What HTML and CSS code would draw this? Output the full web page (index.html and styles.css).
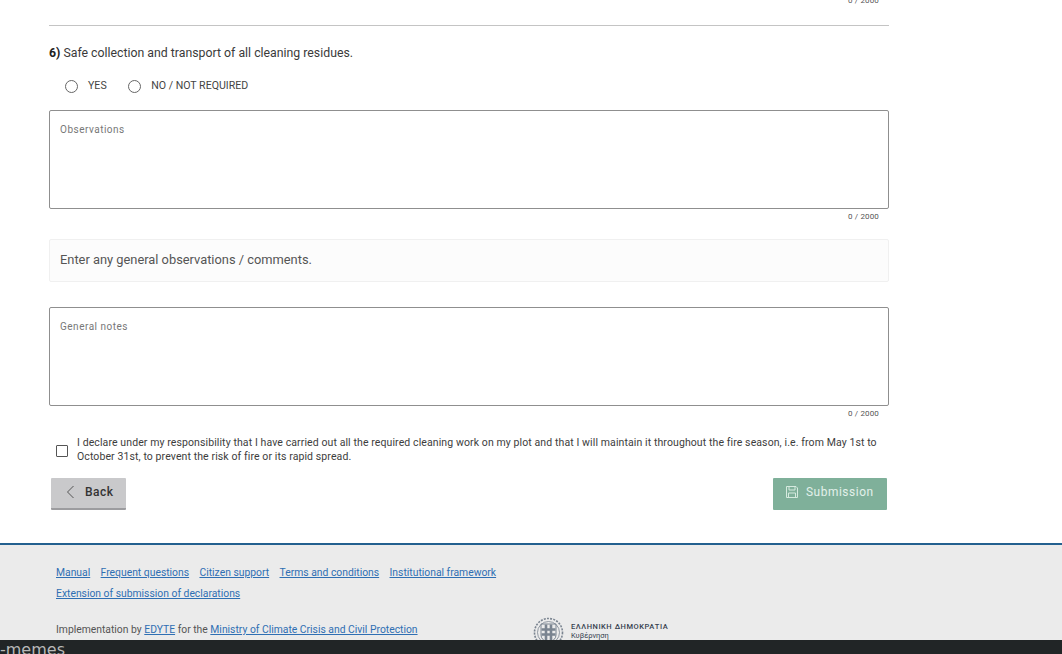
FILE: index.html
```html
<!DOCTYPE html>
<html lang="en">
<head>
<meta charset="utf-8">
<title>Declaration</title>
<link rel="stylesheet" href="styles.css">
</head>
<body>
<div class="viewport">
  <main class="form">
    <div class="counter counter-top">0 / 2000</div>
    <hr class="rule">
    <p class="question"><b>6)</b> Safe collection and transport of all cleaning residues.</p>
    <div class="radios">
      <label class="radio"><span class="radio-dot"></span>YES</label>
      <label class="radio"><span class="radio-dot"></span>NO / NOT REQUIRED</label>
    </div>
    <div class="textarea"><span class="placeholder">Observations</span></div>
    <div class="counter">0 / 2000</div>
    <div class="notice">Enter any general observations / comments.</div>
    <div class="textarea"><span class="placeholder">General notes</span></div>
    <div class="counter">0 / 2000</div>
    <div class="declare">
      <span class="check"></span>
      <p>I declare under my responsibility that I have carried out all the required cleaning work on my plot and that I will maintain it throughout the fire season, i.e. from May 1st to October 31st, to prevent the risk of fire or its rapid spread.</p>
    </div>
    <div class="actions">
      <button class="btn btn-back" type="button">
        <svg width="9" height="14" viewBox="0 0 9 14"><path d="M7.500 1 1.500 7l6 6" fill="none" stroke="#555" stroke-width="1"/></svg>
        <span>Back</span>
      </button>
      <button class="btn btn-submit" type="button">
        <svg width="14" height="14" viewBox="0 0 14 14" fill="none" stroke="#d6eadf" stroke-width="1"><path d="M1.500 1.500h9.500l1.500 1.500v9.500h-11z"/><path d="M4 1.500v3.500h6v-3.500M3.500 12.500v-4.500h7v4.500"/></svg>
        <span>Submission</span>
      </button>
    </div>
  </main>
  <footer class="footer">
    <nav class="links">
      <a href="#">Manual</a><a href="#">Frequent questions</a><a href="#">Citizen support</a><a href="#">Terms and conditions</a><a href="#">Institutional framework</a>
    </nav>
    <nav class="links links-second"><a href="#">Extension of submission of declarations</a></nav>
    <div class="credit">
      <p>Implementation by <a href="#">EDYTE</a> for the <a href="#">Ministry of Climate Crisis and Civil Protection</a></p>
      <div class="gov">
        <svg width="31" height="31" viewBox="0 0 31 31" fill="none" stroke="#7a8490"><circle cx="15.500" cy="15.500" r="14" stroke-dasharray="2 1.200" stroke-width="1.600"/><circle cx="15.500" cy="15.500" r="11" stroke-width=".8"/><path d="M8 7h15v11q0 5-7.500 8q-7.500-3-7.500-8z" stroke-width="1"/><path d="M13 7.500v17M18 7.500v17M8.500 12.500h14M8.500 17.500h14" stroke-width="2.600"/></svg>
        <div class="gov-text"><strong>ΕΛΛΗΝΙΚΗ ΔΗΜΟΚΡΑΤΙΑ</strong><span>Κυβέρνηση</span></div>
      </div>
    </div>
  </footer>
  <div class="bar"><span>-memes</span></div>
</div>
</body>
</html>
```
FILE: styles.css
```css
* { box-sizing: border-box; }
html, body { margin: 0; height: 100%; }
body { background: #fff; font-family: Roboto, "Liberation Sans", sans-serif; color: #333; overflow: hidden; }
.viewport { width: 1062px; height: 654px; display: flex; flex-direction: column; overflow: hidden; position: relative; }
.form { width: 840px; margin-left: 49px; height: 543px; flex: none; }
.counter { height: 14px; padding-right: 10px; text-align: right; font-size: 8px; line-height: 16px; letter-spacing: .15px; color: #555; }
.counter-top { margin-top: -7px; height: 14px; }
.rule { margin: 18px 0 0; border: 0; border-top: 1px solid #c4c4c4; }
.question { margin: 19px 0 0; font-size: 12.300px; line-height: 16px; color: #3a3a3a; }
.question b { color: #222; }
.radios { display: flex; gap: 21.500px; margin: 16px 0 0 16px; height: 17px; }
.radio { display: flex; align-items: center; font-size: 10.600px; color: #444; gap: 10px; padding-bottom: 1px; }
.radio-dot { width: 13px; height: 13px; border: 1px solid #666; border-radius: 50%; margin-top: 3px; }
.textarea { height: 99px; margin-top: 16px; border: 1px solid #8f8f8f; border-radius: 2px; padding: 12px 10px; font-size: 10px; line-height: 13px; }
.placeholder { color: #777; letter-spacing: .5px; }
.notice { margin-top: 16px; height: 43px; border: 1px solid #f0f0f0; border-radius: 2px; background: #fcfcfc; padding: 0 10px; font-size: 12.850px; line-height: 40px; color: #555; }
.notice + .textarea { margin-top: 25px; }
.declare { display: flex; align-items: center; gap: 9px; margin: 16px 0 0 7px; }
.check { flex: none; width: 12px; height: 12px; border: 1px solid #555; border-radius: 1px; margin-top: 2px; }
.declare p { margin: 0; width: 803px; font-size: 10.500px; line-height: 14px; color: #3d3d3d; letter-spacing: .1px; }
.actions { display: flex; justify-content: space-between; margin: 14px 2px 0; }
.btn { display: flex; align-items: center; height: 32px; border: 0; border-radius: 1px; font-family: inherit; font-size: 12px; letter-spacing: .5px; padding: 0; }
.btn-back { width: 75px; background: #c9c9cb; color: #333; font-weight: 500; border-bottom: 2px solid #9c9c9f; padding: 0 0 2px 15px; gap: 10px; }
.btn-submit { width: 114px; background: #7fb09a; color: #e3f1ea; font-size: 11.900px; padding: 0 0 4px 12px; gap: 7px; letter-spacing: .55px; }
.footer { flex: none; height: 98px; background: #ebebeb; border-top: 2px solid #23608f; padding: 20px 0 0 56px; font-size: 10.350px; line-height: 16px; color: #555; overflow: hidden; }
.footer a { color: #2f6fb3; }
.links { display: flex; gap: 10.400px; }
.links-second { margin-top: 5px; }
.credit { display: flex; align-items: flex-start; margin-top: 12px; }
.credit p { margin: 8px 0 0; width: 477px; }
.gov { display: flex; align-items: flex-start; gap: 7px; margin-top: 3px; }
.gov-text { display: flex; flex-direction: column; margin-top: 5px; font-size: 7.500px; line-height: 9px; color: #36414f; }
.gov-text strong { font-weight: 500; letter-spacing: .55px; }
.bar { position: absolute; left: 0; right: 0; top: 640px; height: 14px; background: #212526; color: #b8b8b8; font-family: "DejaVu Sans", sans-serif; font-size: 16px; line-height: 20px; overflow: hidden; }
```
